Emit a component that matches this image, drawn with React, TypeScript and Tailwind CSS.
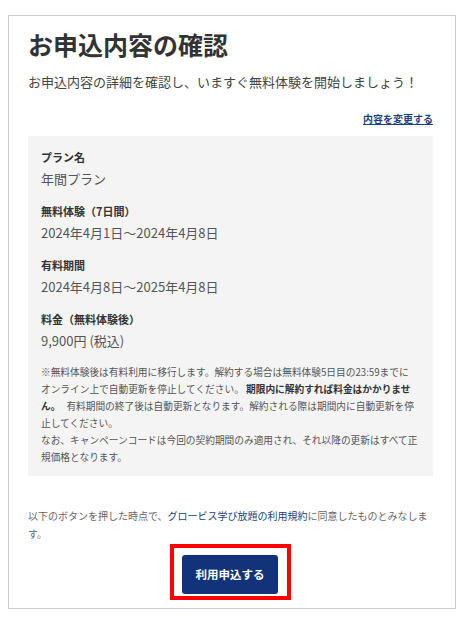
// Application confirmation card (申込内容の確認)
const fontStack = '"Noto Sans CJK JP", "Noto Sans", "Liberation Sans", sans-serif'

type Row = { label: string; value: string }

const rows: Row[] = [
  { label: 'プラン名', value: '年間プラン' },
  { label: '無料体験（7日間）', value: '2024年4月1日～2024年4月8日' },
  { label: '有料期間', value: '2024年4月8日～2025年4月8日' },
  { label: '料金（無料体験後）', value: '9,900円 (税込)' },
]

export default function App() {
  return (
    <div className="w-[474px] h-[640px] bg-white pt-[15px] pl-[8px]" style={{ fontFamily: fontStack }}>
      <div className="w-[448px] border border-[#cccccc] bg-white pl-[19px] pr-[22px] pt-[12px] pb-[8px]">
        <h1 className="text-[25px] leading-[32px] font-bold text-[#333333]">お申込内容の確認</h1>
        <p className="mt-[12px] text-[13px] leading-[20px] text-[#444444]">
          お申込内容の詳細を確認し、いますぐ無料体験を開始しましょう！
        </p>
        <div className="mt-[19px] flex justify-end">
          <a href="#" className="text-[10px] leading-[16px] font-bold text-[#1d3f7e] underline">
            内容を変更する
          </a>
        </div>

        <div className="mt-[9px] bg-[#f4f4f4] px-[13px] pt-[12px] pb-[10px]">
          {rows.map((r, i) => (
            <div key={r.label} className={i > 0 ? 'mt-[12px]' : ''}>
              <div className="text-[11px] leading-[18px] font-bold text-[#333333]">{r.label}</div>
              <div className="mt-[2px] text-[13px] leading-[22px] text-[#555555]">{r.value}</div>
            </div>
          ))}
          <p className="mt-[12px] text-[9.7px] leading-[17px] text-[#555555]">
            ※無料体験後は有料利用に移行します。解約する場合は無料体験5日目の23:59までに
            <br />
            オンライン上で自動更新を停止してください。{' '}
            <span className="font-bold text-[#333333]">期限内に解約すれば料金はかかりません。</span>
            <span className="ml-[6px]">有料期間の終了後は自動更新となります。解約される際は期間内に自動更新を停止してください。</span>
            <br />
            なお、キャンペーンコードは今回の契約期間のみ適用され、それ以降の更新はすべて正規価格となります。
          </p>
        </div>

        <p className="mt-[31px] text-[10px] leading-[18px] text-[#666666]">
          以下のボタンを押した時点で、
          <a href="#" className="text-[#1d3f7e]">グロービス学び放題の利用規約</a>
          に同意したものとみなします。
        </p>

        <div className="mt-[1px] flex justify-center">
          <div className="border-4 border-[#ff0000] pt-[7px] pb-[2px] pl-[8px] pr-[9px]">
            <button className="w-[96px] h-[39px] rounded-[3px] bg-[#12337a] text-white text-[11.5px] font-bold">
              利用申込する
            </button>
          </div>
        </div>
      </div>
    </div>
  )
}
